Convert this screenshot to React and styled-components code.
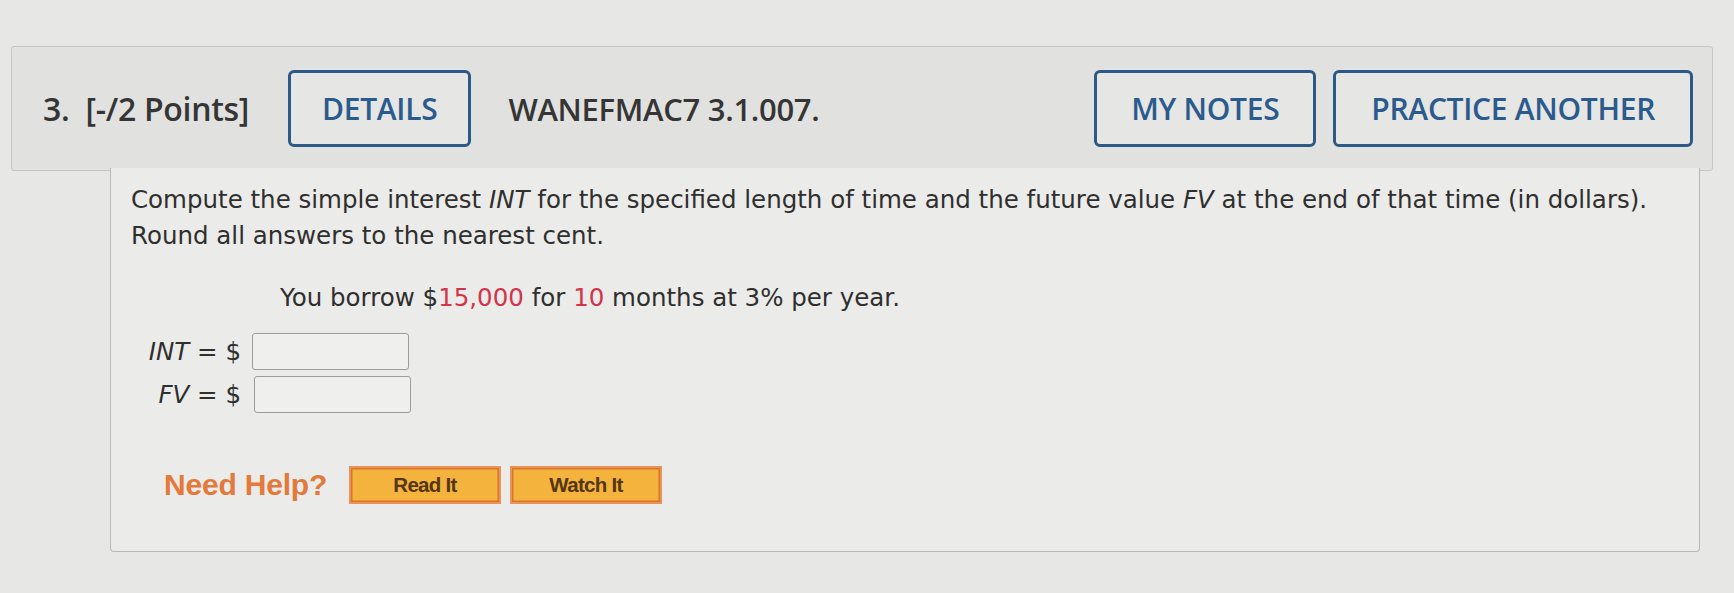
import React from "react";
import styled, { createGlobalStyle } from "styled-components";

const GlobalStyle = createGlobalStyle`
  html, body {
    margin: 0;
    padding: 0;
    background: #e7e7e5;
    width: 1734px;
    height: 593px;
    overflow: hidden;
  }
  * {
    box-sizing: border-box;
  }
`;

const Page = styled.div`
  padding: 46px 21px 0 11px;
`;

const Header = styled.div`
  height: 125px;
  background: #e1e1df;
  border: 1.5px solid #c6c6c4;
  border-radius: 3px;
  display: flex;
  align-items: center;
  padding: 0 19px 0 31px;
  font-family: "Open Sans", "Liberation Sans", sans-serif;
  font-weight: 600;
  color: #353535;
`;

const HeadText = styled.span`
  font-size: ${(p) => p.size || 31}px;
  letter-spacing: -0.3px;
  margin-right: ${(p) => p.gap || 0}px;
  white-space: pre;
`;

const OutlineButton = styled.button`
  height: 77px;
  padding: 0 ${(p) => p.pad || 33}px;
  border: 3px solid #2d5986;
  border-radius: 6px;
  background: #e6e6e4;
  color: #2b5a8c;
  font-family: "Open Sans", "Liberation Sans", sans-serif;
  font-weight: 600;
  font-size: 30px;
  letter-spacing: -0.3px;
  margin-right: ${(p) => p.gap || 0}px;
  margin-left: ${(p) => (p.push ? "auto" : "0")};
  cursor: pointer;
`;

const Body = styled.div`
  margin: -3px 13px 0 99px;
  height: 384px;
  background: #ebebe9;
  border: 1.5px solid #b8b8b6;
  border-top: none;
  border-radius: 0 0 4px 4px;
  padding: 14px 20px;
  font-family: "DejaVu Sans", Verdana, sans-serif;
  font-size: 24.5px;
  color: #2f2f2f;
`;

const Prompt = styled.p`
  margin: 0;
  line-height: 36px;
  white-space: nowrap;
`;

const Given = styled.p`
  margin: 26px 0 0 149px;
  line-height: 36px;
`;

const Red = styled.span`
  color: #d3344a;
`;

const AnswerGrid = styled.div`
  margin-top: 17px;
  display: grid;
  grid-template-columns: 121px 157px;
  row-gap: 6px;
  align-items: center;
`;

const Label = styled.label`
  justify-self: end;
  padding-right: 11px;
  white-space: pre;
  i {
    font-style: italic;
  }
`;

const AnswerInput = styled.input`
  width: 157px;
  height: 37px;
  border: 1.5px solid #9c9c9a;
  border-radius: 3px;
  background: #efefed;
  margin-left: ${(p) => p.shift || 0}px;
`;

const HelpRow = styled.div`
  margin: 53px 0 0 33px;
  display: flex;
  align-items: center;
`;

const NeedHelp = styled.span`
  font-family: "Liberation Sans", Arial, sans-serif;
  font-weight: 700;
  font-size: 30px;
  color: #e3793a;
  margin-right: 22px;
  letter-spacing: -0.2px;
`;

const HelpButton = styled.button`
  width: 152px;
  height: 38px;
  margin-right: 9px;
  background: #f3b33c;
  border: 2px solid #e9935a;
  box-shadow: inset 0 0 0 1.5px #d8762c;
  color: #553612;
  font-family: "Liberation Sans", Arial, sans-serif;
  font-weight: 700;
  font-size: 20.5px;
  letter-spacing: -0.7px;
  padding: 0;
  cursor: pointer;
`;

export default function App() {
  return (
    <>
      <GlobalStyle />
      <Page>
        <Header>
          <HeadText size={32} gap={39}>3.  [-/2 Points]</HeadText>
          <OutlineButton pad={31} gap={37}>DETAILS</OutlineButton>
          <HeadText>WANEFMAC7 3.1.007.</HeadText>
          <OutlineButton push pad={34} gap={17}>MY NOTES</OutlineButton>
          <OutlineButton pad={35}>PRACTICE ANOTHER</OutlineButton>
        </Header>
        <Body>
          <Prompt>
            Compute the simple interest <i>INT</i> for the specified length of time and the
            future value <i>FV</i> at the end of that time (in dollars).
            <br />
            Round all answers to the nearest cent.
          </Prompt>
          <Given>
            You borrow $<Red>15,000</Red> for <Red>10</Red> months at 3% per year.
          </Given>
          <AnswerGrid>
            <Label>
              <i>INT</i> = $
            </Label>
            <AnswerInput type="text" />
            <Label>
              <i>FV</i> = $
            </Label>
            <AnswerInput type="text" shift={2} />
          </AnswerGrid>
          <HelpRow>
            <NeedHelp>Need Help?</NeedHelp>
            <HelpButton>Read It</HelpButton>
            <HelpButton>Watch It</HelpButton>
          </HelpRow>
        </Body>
      </Page>
    </>
  );
}
